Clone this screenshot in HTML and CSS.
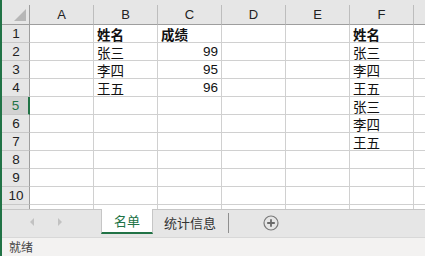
FILE: index.html
```html
<!DOCTYPE html>
<html lang="zh">
<head>
<meta charset="utf-8">
<link rel="stylesheet" href="styles.css">
</head>
<body>
<div class="app">
  <div class="sheet">
    <div class="row head">
      <div class="corner"><span class="tri"></span></div>
      <div class="ch">A</div><div class="ch">B</div><div class="ch">C</div><div class="ch">D</div><div class="ch">E</div><div class="ch">F</div><div class="ch"></div>
    </div>
    <div class="row"><div class="rh">1</div><div class="c"></div><div class="c b">姓名</div><div class="c b">成绩</div><div class="c"></div><div class="c"></div><div class="c b">姓名</div><div class="c"></div></div>
    <div class="row"><div class="rh">2</div><div class="c"></div><div class="c">张三</div><div class="c n">99</div><div class="c"></div><div class="c"></div><div class="c">张三</div><div class="c"></div></div>
    <div class="row"><div class="rh">3</div><div class="c"></div><div class="c">李四</div><div class="c n">95</div><div class="c"></div><div class="c"></div><div class="c">李四</div><div class="c"></div></div>
    <div class="row"><div class="rh">4</div><div class="c"></div><div class="c">王五</div><div class="c n">96</div><div class="c"></div><div class="c"></div><div class="c">王五</div><div class="c"></div></div>
    <div class="row"><div class="rh sel">5</div><div class="c"></div><div class="c"></div><div class="c"></div><div class="c"></div><div class="c"></div><div class="c">张三</div><div class="c"></div></div>
    <div class="row"><div class="rh">6</div><div class="c"></div><div class="c"></div><div class="c"></div><div class="c"></div><div class="c"></div><div class="c">李四</div><div class="c"></div></div>
    <div class="row"><div class="rh">7</div><div class="c"></div><div class="c"></div><div class="c"></div><div class="c"></div><div class="c"></div><div class="c">王五</div><div class="c"></div></div>
    <div class="row"><div class="rh">8</div><div class="c"></div><div class="c"></div><div class="c"></div><div class="c"></div><div class="c"></div><div class="c"></div><div class="c"></div></div>
    <div class="row"><div class="rh">9</div><div class="c"></div><div class="c"></div><div class="c"></div><div class="c"></div><div class="c"></div><div class="c"></div><div class="c"></div></div>
    <div class="row"><div class="rh">10</div><div class="c"></div><div class="c"></div><div class="c"></div><div class="c"></div><div class="c"></div><div class="c"></div><div class="c"></div></div>
    <div class="row"><div class="rh"></div><div class="c"></div><div class="c"></div><div class="c"></div><div class="c"></div><div class="c"></div><div class="c"></div><div class="c"></div></div>
  </div>
  <div class="tabs">
    <div class="nav"><span class="arr left"></span><span class="arr right"></span></div>
    <div class="tab active">名单</div>
    <div class="tab other">统计信息</div>
    <div class="add">
      <svg width="16" height="16" viewBox="0 0 16 16"><circle cx="8" cy="8" r="7" fill="none" stroke="#7a7a7a" stroke-width="1.2"/><path d="M8 4.2v7.6M4.2 8h7.6" stroke="#6a6a6a" stroke-width="1.8"/></svg>
    </div>
  </div>
  <div class="status">就绪</div>
</div>
</body>
</html>
```
FILE: styles.css
```css
html, body { margin: 0; padding: 0; }
body {
  width: 425px;
  height: 256px;
  overflow: hidden;
  font-family: "Liberation Sans", "Noto Sans CJK SC", sans-serif;
  background: #f3f2f1;
}
.app {
  border-left: 2px solid #217346;
  height: 256px;
  display: flex;
  flex-direction: column;
}
.sheet {
  height: 209px;
  overflow: hidden;
  background: #e6e6e6;
  padding-top: 5px;
  box-sizing: border-box;
  flex: none;
}
.row {
  display: grid;
  grid-template-columns: 28px repeat(7, 64px);
  height: 18px;
}
.row.head { height: 20px; }
.row > div {
  box-sizing: border-box;
  border-right: 1px solid #d0d0d0;
  border-bottom: 1px solid #d0d0d0;
  background: #fff;
}
.row.head > div {
  background: #e6e6e6;
  border-right: 1px solid #bdbdbd;
  border-bottom: 1px solid #9e9e9e;
  font-size: 13px;
  line-height: 15px;
  color: #222;
  display: flex;
  align-items: flex-end;
  justify-content: center;
  padding-bottom: 2px;
}
.row.head > .corner {
  position: relative;
  border-right: 1px solid #9e9e9e;
}
.tri {
  position: absolute;
  right: 3px;
  bottom: 3px;
  width: 0; height: 0;
  border-left: 12px solid transparent;
  border-bottom: 12px solid #b7b7b7;
}
.row > .rh {
  background: #e6e6e6;
  border-right: 1px solid #9e9e9e;
  border-bottom: 1px solid #c8c8c8;
  font-size: 13.5px;
  color: #222;
  text-align: center;
  line-height: 17px;
  padding-left: 1px;
}
.row > .rh.sel {
  background: #d2d2d2;
  border-right: 2px solid #217346;
  color: #217346;
}
.c {
  font-family: "Noto Sans CJK SC", "Liberation Sans", sans-serif;
  font-size: 13.5px;
  line-height: 16px;
  padding-top: 1px;
  color: #111;
  padding-left: 3px;
  white-space: nowrap;
  overflow: hidden;
}
.c.b { font-weight: bold; }
.c.n {
  font-family: "Liberation Sans", sans-serif;
  font-size: 13.5px;
  text-align: right;
  padding-right: 3px;
}
.tabs {
  height: 28px;
  flex: none;
  background: #e6e6e6;
  border-top: 1px solid #c6c6c6;
  box-sizing: border-box;
  display: flex;
  align-items: flex-start;
}
.nav {
  width: 99px;
  height: 24px;
  display: flex;
  align-items: center;
  gap: 24px;
  padding-left: 28px;
  box-sizing: border-box;
}
.arr { width: 0; height: 0; border-top: 4px solid transparent; border-bottom: 4px solid transparent; }
.arr.left { border-right: 4px solid #c2c2c2; }
.arr.right { border-left: 4px solid #c2c2c2; }
.tab {
  box-sizing: border-box;
  font-family: "Noto Sans CJK SC", sans-serif;
  font-size: 13px;
  white-space: nowrap;
}
.tab.active {
  width: 52px;
  background: #fff;
  color: #217346;
  border-left: 1px solid #c6c6c6;
  border-right: 1px solid #c6c6c6;
  border-bottom: 2px solid #217346;
  text-align: center;
  margin-top: -1px;
  height: 25px;
  line-height: 23px;
}
.tab.other {
  color: #333;
  padding: 0 12px 0 11px;
  border-right: 1px solid #8f8f8f;
  height: 20px;
  margin-top: 3px;
  line-height: 20px;
}
.add {
  margin-left: 34px;
  margin-top: 5px;
  height: 16px;
}
.add svg { display: block; }
.status {
  flex: 1;
  background: #f3f2f1;
  border-top: 1px solid #d8d8d8;
  font-family: "Noto Sans CJK SC", sans-serif;
  font-size: 12px;
  color: #444;
  padding-left: 7px;
  line-height: 17px;
}
```
